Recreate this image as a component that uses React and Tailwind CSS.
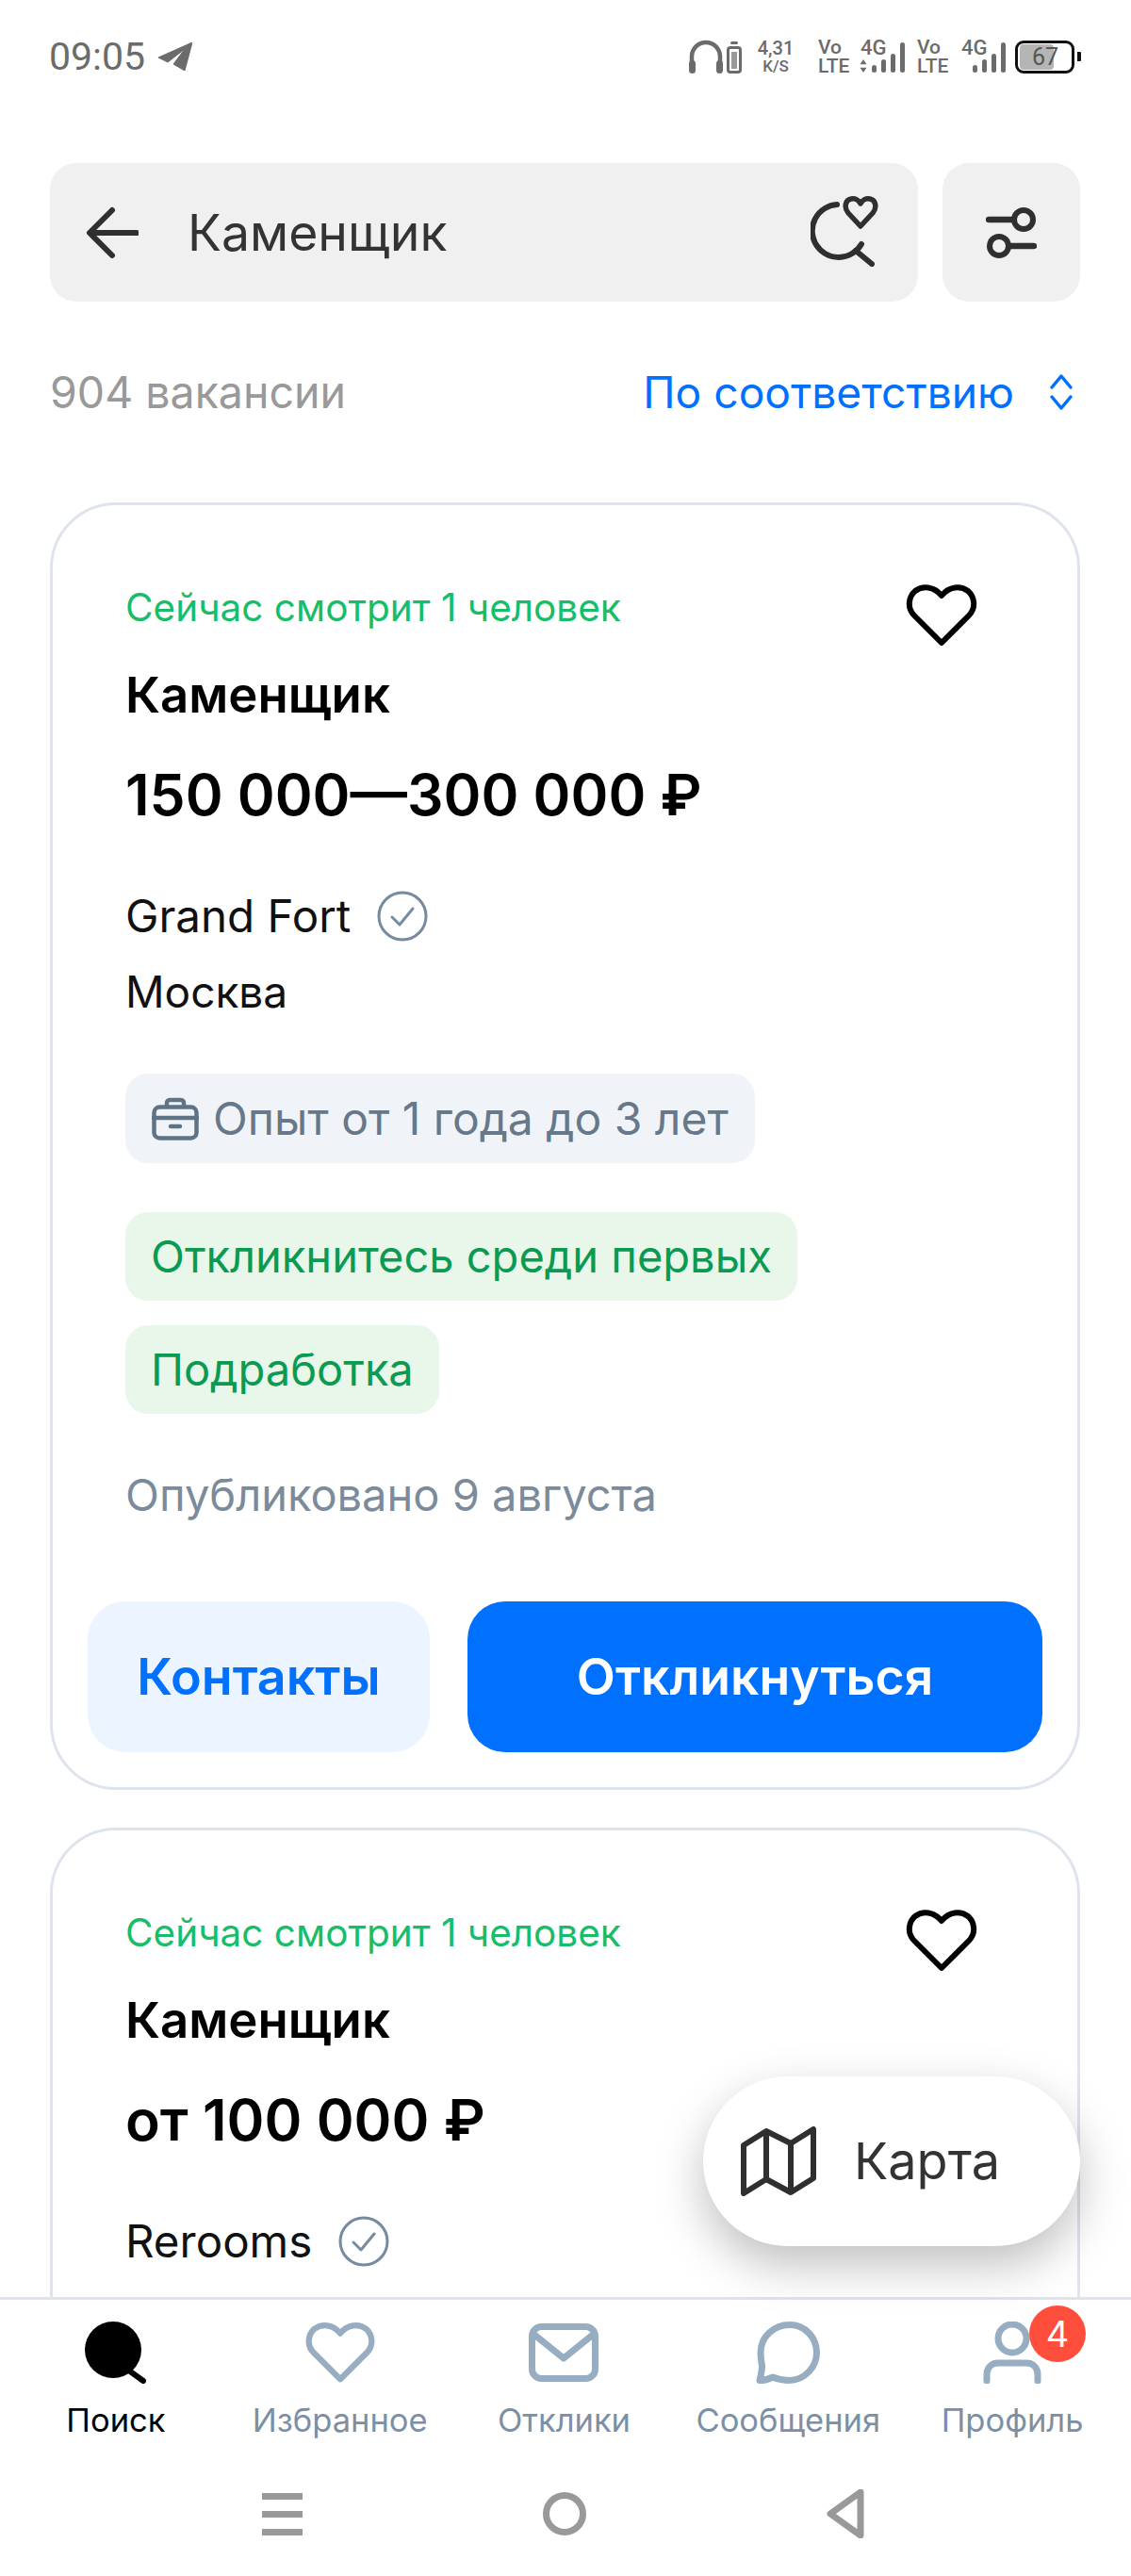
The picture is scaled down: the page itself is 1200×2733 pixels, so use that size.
import React from "react";

const F = { fontFamily: "Inter, 'Noto Sans', sans-serif" };
const R = { fontFamily: "Roboto, 'Noto Sans', sans-serif" };

function Heart({ className, stroke = "#000", sw = 6 }) {
  return (
    <svg viewBox="0 0 76 66" className={className} fill="none">
      <path d="M38 62 L9 33 C1 25 3 13 10 7 C18 1 30 2 38 12 C46 2 58 1 66 7 C73 13 75 25 67 33Z" stroke={stroke} strokeWidth={sw} strokeLinejoin="round" />
    </svg>
  );
}

function Bars({ arrows }) {
  return (
    <div className="flex items-end gap-[5px] h-[34px]">
      {arrows && (
        <svg viewBox="0 0 8 16" className="w-[8px] h-[14px] mr-0" fill="#6b6b6b">
          <path d="M4 0l4 6H0zM4 16l4-6H0z" />
        </svg>
      )}
      <div className="w-[5px] h-[8px] rounded-full bg-[#6b6b6b]" />
      <div className="w-[5px] h-[14px] rounded-full bg-[#6b6b6b]" />
      <div className="w-[5px] h-[20px] rounded-full bg-[#6b6b6b]" />
      <div className="w-[5px] h-[32px] rounded-full bg-[#6b6b6b]" />
    </div>
  );
}

function VoLte() {
  return (
    <div className="flex flex-col w-[30px] text-[#6b6b6b] text-[21px] leading-[20px] font-medium" style={R}>
      <span>Vo</span>
      <span>LTE</span>
    </div>
  );
}

function StatusBar() {
  return (
    <div className="h-[120px] flex items-center justify-between pl-[52px] pr-[53px] shrink-0">
      <div className="flex items-center gap-[14px]">
        <span className="text-[41px] leading-none text-[#6b6b6b]" style={R}>09:05</span>
        <svg viewBox="0 0 36 30" className="w-[36px] h-[30px]" fill="#6b6b6b">
          <path d="M36 0 L0 16 L10 21 L28 7 L16 23 L28 30Z" stroke="#6b6b6b" strokeWidth="1" strokeLinejoin="round" />
        </svg>
      </div>
      <div className="flex items-center">
        <svg viewBox="0 0 36 36" className="w-[36px] h-[36px]" fill="none">
          <path d="M3 26V18a15 15 0 0 1 30 0v8" stroke="#6b6b6b" strokeWidth="4.500" />
          <rect x="0" y="22" width="7" height="14" rx="3.5" fill="#6b6b6b" />
          <rect x="29" y="22" width="7" height="14" rx="3.5" fill="#6b6b6b" />
        </svg>
        <svg viewBox="0 0 16 36" className="w-[16px] h-[36px] ml-[4px]" fill="none">
          <rect x="4" y="2" width="8" height="3" rx="1.5" fill="#6b6b6b" />
          <rect x="1.5" y="8.5" width="13" height="26" rx="2.5" stroke="#6b6b6b" strokeWidth="3" />
          <rect x="5" y="13" width="6" height="18" fill="#999" />
        </svg>
        <div className="flex flex-col items-center ml-[15px] w-[42px] text-[#6b6b6b] font-medium" style={R}>
          <span className="text-[20px] leading-[20px]">4,31</span>
          <span className="text-[17px] leading-[19px]">K/S</span>
        </div>
        <div className="ml-[24px]"><VoLte /></div>
        <div className="ml-[14px] flex flex-col items-start w-[48px]">
          <span className="text-[22px] leading-[16px] font-medium text-[#6b6b6b] -mb-[16px] ml-px" style={R}>4G</span>
          <Bars arrows />
        </div>
        <div className="ml-[13px]"><VoLte /></div>
        <div className="ml-[17px] flex flex-col items-start w-[47px]">
          <span className="text-[22px] leading-[16px] font-medium text-[#6b6b6b] -mb-[16px]" style={R}>4G</span>
          <div className="ml-[12px]"><Bars /></div>
        </div>
        <div className="relative ml-[10px] w-[63px] h-[35px] rounded-[9px] border-[3px] border-[#111] flex items-center justify-center overflow-hidden">
          <div className="absolute left-[2px] top-[1px] bottom-[1px] w-[36px] rounded-[4px] bg-[#b5b5b5]" />
          <span className="relative text-[25px] leading-none text-[#555] ml-px" style={R}>67</span>
        </div>
        <div className="w-[4px] h-[10px] ml-[3px] bg-[#111] rounded-r-[1px]" />
      </div>
    </div>
  );
}

function SearchHeader() {
  return (
    <div className="flex gap-[26px] pl-[53px] pr-[54px] mt-[53px] h-[147px] shrink-0">
      <div className="flex-1 bg-[#f0f0f0] rounded-[28px] flex items-center pl-[38px] pr-[42px]">
        <svg viewBox="0 0 56 56" className="w-[56px] h-[56px]" fill="none">
          <path d="M54 28H5M28 4L4 28l24 24" stroke="#2f2f2f" strokeWidth="6" strokeLinecap="round" strokeLinejoin="round" />
        </svg>
        <span className="ml-[52px] flex-1 text-[53.5px] leading-none text-[#333]" style={F}>Каменщик</span>
        <svg viewBox="0 0 72 76" className="w-[72px] h-[76px] -mt-[4px]" fill="none">
          <path d="M28 10 A28 28 0 1 0 54 52" stroke="#2f2f2f" strokeWidth="6" strokeLinecap="round" />
          <path d="M48 59 L65 73" stroke="#2f2f2f" strokeWidth="6" strokeLinecap="round" />
          <path d="M53 33 L40 19 C35 13 37 5 43 4 C47 3 51 5 53 9 C55 5 59 3 63 4 C69 5 71 13 66 19Z" stroke="#2f2f2f" strokeWidth="5.5" strokeLinejoin="round" />
        </svg>
      </div>
      <div className="w-[146px] bg-[#f0f0f0] rounded-[28px] flex items-center justify-center">
        <svg viewBox="0 0 54 54" className="w-[54px] h-[54px]" fill="none">
          <path d="M3 13H28" stroke="#2f2f2f" strokeWidth="6.500" strokeLinecap="round" />
          <circle cx="40" cy="13" r="10" stroke="#2f2f2f" strokeWidth="6" />
          <path d="M26 41H51" stroke="#2f2f2f" strokeWidth="6.500" strokeLinecap="round" />
          <circle cx="14" cy="41" r="10" stroke="#2f2f2f" strokeWidth="6" />
        </svg>
      </div>
    </div>
  );
}

function Card({ watching, title, salary, company, children, className = "" }) {
  return (
    <div className={"relative border-[3px] border-[#dde4ed] rounded-[70px] pt-[85px] pl-[77px] pr-[37px] shrink-0 " + className} style={F}>
      <div className="absolute right-[106px] top-[84px]">
        <Heart className="w-[76px] h-[66px]" />
      </div>
      <div className="text-[40.5px] leading-[48px] text-[#17bd69]">{watching}</div>
      <div className="mt-[38px] text-[52.7px] leading-[60px] font-semibold text-black">{title}</div>
      <div className="mt-[40px] text-[60.5px] leading-[72px] font-semibold text-black">{salary}</div>
      <div className="mt-[64px] flex items-center gap-[28px] text-[47.5px] leading-[58px] text-[#111]">
        <span>{company}</span>
        <svg viewBox="0 0 54 54" className="w-[54px] h-[54px]" fill="none">
          <circle cx="27" cy="27" r="25" stroke="#768ba0" strokeWidth="3" />
          <path d="M16 28l8 8 14-17" stroke="#768ba0" strokeWidth="3" strokeLinecap="round" strokeLinejoin="round" />
        </svg>
      </div>
      {children}
    </div>
  );
}

function NavItem({ label, active, children, badge }) {
  return (
    <div className="relative flex flex-col items-center">
      <div className="h-[66px] flex items-center justify-center">{children}</div>
      <span className={"mt-[19px] text-[34.5px] leading-[40px] " + (active ? "text-black" : "text-[#7b90a6]")} style={F}>{label}</span>
      {badge}
    </div>
  );
}

function BottomNav() {
  const c = "#97adc2";
  return (
    <div className="shrink-0 bg-white border-t-[3px] border-[#dde4ed]">
      <div className="grid grid-cols-5 pl-[4px] pr-[7px] pt-[23px]">
        <NavItem label="Поиск" active>
          <svg viewBox="0 0 66 66" className="w-[66px] h-[66px]">
            <circle cx="30" cy="30" r="30" fill="#000" />
            <path d="M44 50 L62 63" stroke="#000" strokeWidth="6" strokeLinecap="round" />
          </svg>
        </NavItem>
        <NavItem label="Избранное">
          <Heart className="w-[74px] h-[66px]" stroke={c} sw={6.5} />
        </NavItem>
        <NavItem label="Отклики">
          <svg viewBox="0 0 74 62" className="w-[74px] h-[62px]" fill="none">
            <rect x="3.500" y="3.500" width="67" height="55" rx="10" stroke={c} strokeWidth="7" />
            <path d="M6 12 L37 37 L68 12" stroke={c} strokeWidth="7" strokeLinejoin="round" />
          </svg>
        </NavItem>
        <NavItem label="Сообщения">
          <svg viewBox="0 0 68 66" className="w-[68px] h-[66px]" fill="none">
            <path d="M36 3.500 C18 3.500 5 17 5 33 C5 39 6 43 6.500 47 C6.500 53 5 58 4 62.500 C10 62.500 14 61 18 59 C23 61 29 62.500 35 62.500 C52 62.500 64.500 48 64.500 33 C64.500 17 52 3.500 36 3.500Z" stroke={c} strokeWidth="7" strokeLinejoin="round" />
          </svg>
        </NavItem>
        <NavItem
          label="Профиль"
          badge={
            <div className="absolute right-[41px] top-[-17px] w-[60px] h-[60px] rounded-full bg-[#ff4f3c] flex items-center justify-center text-white text-[38px] leading-none" style={F}>4</div>
          }
        >
          <svg viewBox="0 0 62 66" className="w-[62px] h-[66px]" fill="none">
            <circle cx="31" cy="18" r="15" stroke={c} strokeWidth="7" />
            <path d="M4 63 V56 C4 49 9 44 16 44 H46 C53 44 58 49 58 56 V63" stroke={c} strokeWidth="7" strokeLinecap="round" />
          </svg>
        </NavItem>
      </div>
      <div className="h-[145px] flex items-center justify-center gap-[255px] pr-[6px] pt-[13px]">
        <div className="flex flex-col gap-[12px] w-[43px]">
          <div className="h-[7px] bg-[#999]" />
          <div className="h-[7px] bg-[#999]" />
          <div className="h-[7px] bg-[#999]" />
        </div>
        <div className="w-[46px] h-[46px] rounded-full border-[7px] border-[#999]" />
        <svg viewBox="0 0 40 52" className="w-[40px] h-[52px]" fill="none">
          <path d="M36 3 L4 26 L36 49Z" stroke="#999" strokeWidth="7" strokeLinejoin="round" />
        </svg>
      </div>
    </div>
  );
}

export default function App() {
  return (
    <div className="relative w-[1200px] h-[2733px] bg-white overflow-hidden flex flex-col" style={F}>
      <StatusBar />
      <SearchHeader />
      <div className="flex justify-between items-center pl-[53px] pr-[54px] mt-[68px] shrink-0">
        <span className="text-[46.5px] leading-[56px] text-[#999]">904 вакансии</span>
        <div className="flex items-center gap-[37px] pr-[7px]">
          <span className="text-[46.2px] leading-[56px] text-[#0070ff]">По соответствию</span>
          <svg viewBox="0 0 26 40" className="w-[26px] h-[40px]" fill="none">
            <path d="M3 15L13 3l10 12M3 25l10 12 10-12" stroke="#0070ff" strokeWidth="3.500" strokeLinecap="round" strokeLinejoin="round" />
          </svg>
        </div>
      </div>
      <div className="flex-1 min-h-0 overflow-hidden pl-[53px] pr-[54px] mt-[89px] flex flex-col gap-[40px]">
        <Card watching="Сейчас смотрит 1 человек" title="Каменщик" salary="150 000—300 000 ₽" company="Grand Fort">
          <div className="mt-[22px] text-[46px] leading-[58px] text-[#111]">Москва</div>
          <div className="mt-[58px] inline-flex items-center h-[95px] px-[28px] rounded-[24px] bg-[#f0f4f9] text-[48px] text-[#66788a]">
            <svg viewBox="0 0 50 46" className="w-[50px] h-[46px] mr-[15px]" fill="none">
              <rect x="2.500" y="10.500" width="45" height="33" rx="6" stroke="#5f7386" strokeWidth="4.500" />
              <path d="M2 22H48M16 10V6a3 3 0 0 1 3-3h12a3 3 0 0 1 3 3v4M20 31h10" stroke="#5f7386" strokeWidth="4.500" strokeLinecap="round" />
            </svg>
            Опыт от 1 года до 3 лет
          </div>
          <div className="mt-[52px] flex flex-col items-start gap-[26px]">
            <div className="h-[94px] flex items-center px-[27px] rounded-[24px] bg-[#e8f7ea] text-[47px] text-[#0a9a51]">Откликнитесь среди первых</div>
            <div className="h-[94px] flex items-center px-[27px] rounded-[24px] bg-[#e8f7ea] text-[47px] text-[#0a9a51]">Подработка</div>
          </div>
          <div className="mt-[58px] text-[47px] leading-[56px] text-[#7b8b9c]">Опубликовано 9 августа</div>
          <div className="mt-[85px] -ml-[40px] flex gap-[40px] h-[160px]">
            <div className="w-[363px] rounded-[40px] bg-[#ebf4ff] flex items-center justify-center text-[53.8px] font-semibold text-[#0070ff]">Контакты</div>
            <div className="flex-1 rounded-[40px] bg-[#0070ff] flex items-center justify-center text-[53.5px] font-semibold text-white">Откликнуться</div>
          </div>
          <div className="h-[37px]" />
        </Card>
        <Card watching="Сейчас смотрит 1 человек" title="Каменщик" salary="от 100 000 ₽" company="Rerooms" className="pb-[200px]" />
      </div>
      <BottomNav />
      <div className="absolute left-[746px] top-[2203px] w-[400px] h-[180px] rounded-full bg-white shadow-[0_20px_50px_rgba(0,0,0,0.25)] flex items-center pl-[40px] z-10">
        <svg viewBox="0 0 80 74" className="w-[80px] h-[74px]" fill="none">
          <path d="M3 20 L27 5 L53 18 L77 3 V55 L53 70 L27 56 L3 71Z" stroke="#2f2f2f" strokeWidth="6" strokeLinejoin="round" />
          <path d="M27 5V56M53 18V70" stroke="#2f2f2f" strokeWidth="6" />
        </svg>
        <span className="ml-[40px] text-[54px] leading-none text-[#333]" style={F}>Карта</span>
      </div>
    </div>
  );
}
